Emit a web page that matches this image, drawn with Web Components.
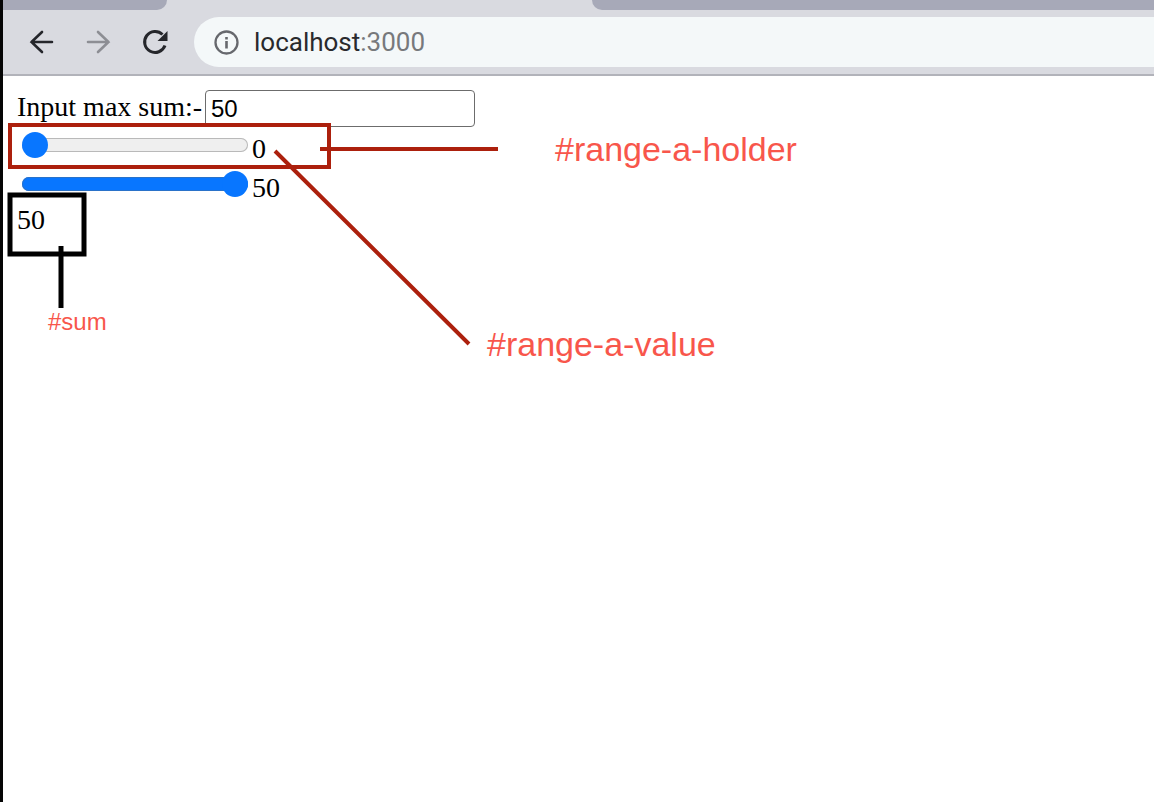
<!DOCTYPE html>
<html lang="en">
<head>
<meta charset="utf-8">
<title>localhost:3000</title>
<style>
html,body{margin:0;min-height:100%}
body{background:#fff;font-family:"Liberation Serif",serif;font-size:28px;color:#000}
</style>
</head>
<body>
<browser-window>
  <browser-toolbar slot="bar" host="localhost" port=":3000"></browser-toolbar>
  <sum-app></sum-app>
  <page-notes></page-notes>
</browser-window>
<script>
const define = (name, html, setup) => customElements.define(name, class extends HTMLElement {
  connectedCallback() {
    if (this.shadowRoot) return;
    const t = document.createElement('template');
    t.innerHTML = html;
    this.attachShadow({mode: 'open'}).append(t.content.cloneNode(true));
    if (setup) setup(this, this.shadowRoot);
  }
});

define('browser-window', `
<style>
:host{display:flex;flex-direction:column;min-height:100vh;box-sizing:border-box;border-left:3px solid #050505;overflow:hidden}
main{position:relative;flex:1}
</style>
<slot name="bar"></slot><main><slot></slot></main>`);

define('browser-toolbar', `
<style>
:host{display:block;background:#d9dae0;border-bottom:2px solid #b2b3ba;font-family:Roboto,sans-serif}
.tabs{display:flex;height:10px}
.tab{background:#a7a9b8}
.left{width:164px;border-radius:0 0 12px 0}
.active{width:425px}
.right{flex:1;border-radius:0 0 0 12px}
nav{display:flex;align-items:center;padding:7px 0;height:50px}
.actions{display:flex;gap:25px;padding:0 23px 0 22px}
button{border:0;padding:0;background:none;width:32px;height:32px;color:#25262b;display:block}
button:disabled{color:#8d8e94}
svg{display:block;fill:none;stroke:currentColor;stroke-width:2.6}
.address{flex:1;display:flex;align-items:center;gap:14px;height:50px;padding-left:19px;background:#f4f8f9;border-radius:25px 0 0 25px}
.info{width:27px;height:27px;color:#66686d}
.url{font-size:26px;line-height:30px;color:#292a2d;outline:0;white-space:nowrap}
.port{color:#77797c}
</style>
<div class="tabs"><div class="tab left"></div><div class="active"></div><div class="tab right"></div></div>
<nav aria-label="Browser">
  <div class="actions">
    <button aria-label="Back"><svg width="32" height="32" viewBox="0 0 32 32"><path d="M27 16H6.500M17 6 6.500 16 17 26" stroke-linecap="round"/></svg></button>
    <button aria-label="Forward" disabled><svg width="32" height="32" viewBox="0 0 32 32"><path d="M6 16H26.500M16 6 26.500 16 16 26" stroke-linecap="round"/></svg></button>
    <button aria-label="Reload"><svg width="32" height="32" viewBox="0 0 32 32"><path d="M26 19.500A10.500 10.500 0 1 1 23.500 8.500" stroke-width="3"/><path d="M28.500 5V15H18.500Z" fill="currentColor" stroke="none"/></svg></button>
  </div>
  <div class="address">
    <button class="info" aria-label="Site information"><svg width="27" height="27" viewBox="0 0 27 27"><circle cx="13.500" cy="13.500" r="11" stroke-width="2.300"/><path d="M13.500 12V19.500M13.500 8V10.500" stroke-width="2.600"/></svg></button>
    <div class="url" role="textbox" aria-label="Address" contenteditable="true" spellcheck="false"><span class="host"></span><span class="port"></span></div>
  </div>
</nav>`, (el, root) => {
  root.querySelector('.host').textContent = el.getAttribute('host');
  root.querySelector('.port').textContent = el.getAttribute('port');
});

define('range-holder', `
<style>
:host{display:flex;align-items:flex-start;padding:5px 0 0 5px;gap:4px;line-height:34px}
input{appearance:none;-webkit-appearance:none;width:226px;height:26px;margin:0;background:none}
input::-webkit-slider-runnable-track{height:14px;box-shadow:inset 0 0 0 1px #b9b9b9;border-radius:7px;background:#efefef}
:host([full]) input::-webkit-slider-runnable-track{background:#0876ff;box-shadow:inset 0 0 0 1px #2a72c9}
input::-webkit-slider-thumb{-webkit-appearance:none;width:26px;height:26px;margin-top:-6px;border-radius:50%;background:#0876ff}
</style>
<input type="range" min="0" max="50"><output></output>`, (el, root) => {
  const input = root.querySelector('input'), output = root.querySelector('output');
  input.setAttribute('aria-label', el.getAttribute('label'));
  input.value = el.getAttribute('value');
  const show = () => { output.textContent = input.value; };
  input.addEventListener('input', () => {
    show();
    el.toggleAttribute('full', input.value === input.max);
    el.dispatchEvent(new CustomEvent('change-value', {bubbles: true}));
  });
  show();
});

define('sum-app', `
<style>
:host{display:block;padding:14px}
.max{display:flex;align-items:flex-start;line-height:34px}
input{box-sizing:border-box;width:270px;height:37px;margin:0;padding:0 5px;border:1px solid #6c6c6c;border-radius:4px;background:#fff;font:24px "Liberation Sans",sans-serif;color:#000}
label{width:188px;white-space:nowrap}
.sum{line-height:30px}
</style>
<div class="max"><label for="max">Input max sum:-</label><input id="max" type="text" inputmode="numeric" value="50"></div>
<range-holder label="Range A" value="0"></range-holder>
<range-holder label="Range B" value="50" full></range-holder>
<div class="sum">50</div>`, (el, root) => {
  root.addEventListener('change-value', () => {
    root.querySelector('.sum').textContent = [...root.querySelectorAll('range-holder')]
      .reduce((n, r) => n + Number(r.shadowRoot.querySelector('input').value), 0);
  });
});

define('page-notes', `
<style>
:host{position:absolute;inset:0;pointer-events:none;font-family:"Liberation Sans",sans-serif;color:#f8564b}
svg{position:absolute;left:0;top:0;fill:none;overflow:visible}
span{position:absolute;font-size:34px;line-height:40px;white-space:nowrap}
.holder{left:552px;top:53px}
.value{left:484px;top:248px}
.total{left:45px;top:226px;font-size:24px}
</style>
<svg width="800" height="300" aria-hidden="true">
  <g stroke="#ac200d" stroke-width="4"><rect x="7" y="49" width="319" height="42"/><path d="M317 73H495M272 75 466 268"/></g>
  <g stroke="#000" stroke-width="5"><rect x="7" y="119" width="74" height="59"/><path d="M58 170V232"/></g>
</svg>
<span class="holder">#range-a-holder</span>
<span class="value">#range-a-value</span>
<span class="total">#sum</span>`);
</script>
</body>
</html>
